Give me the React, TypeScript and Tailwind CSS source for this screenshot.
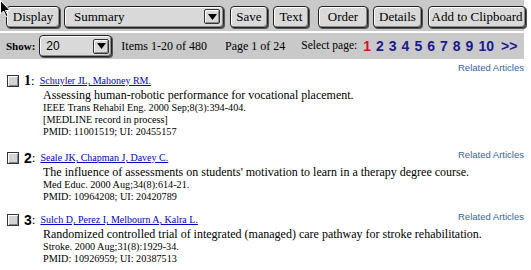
import React from "react";

const base =
  "h-[22px] flex items-center rounded-[4px] border border-[#222] bg-[#d9d9d9] text-[13px] text-black shadow-[inset_1px_1px_0_#fff,inset_-1px_-1px_0_#8a8a8a,1px_1px_0_#555] shrink-0 whitespace-nowrap";
const btn = base + " justify-center";

const sans = { fontFamily: '"Liberation Sans", Arial, sans-serif' };

function Arrow() {
  return (
    <span className="w-[16px] h-[15px] rounded-[2px] border border-[#333] bg-[#d9d9d9] shadow-[inset_1px_1px_0_#fff,inset_-1px_-1px_0_#8a8a8a] flex items-center justify-center">
      <svg width="9" height="6" viewBox="0 0 9 6">
        <path d="M0 0H9L4.5 6Z" fill="#000" />
      </svg>
    </span>
  );
}

function Checkbox() {
  return (
    <span className="w-[12px] h-[12px] shrink-0 border border-[#333] bg-[#d4d4d4] shadow-[inset_1px_1px_0_#fff,inset_-1px_-1px_0_#888]" />
  );
}

type Item = {
  n: string;
  authors: string;
  title: string;
  lines: string[];
  mt: string;
};

const items: Item[] = [
  {
    n: "1",
    authors: "Schuyler JL, Mahoney RM.",
    title: "Assessing human-robotic performance for vocational placement.",
    lines: [
      "IEEE Trans Rehabil Eng. 2000 Sep;8(3):394-404.",
      "[MEDLINE record in process]",
      "PMID: 11001519; UI: 20455157",
    ],
    mt: "mt-[3px]",
  },
  {
    n: "2",
    authors: "Seale JK, Chapman J, Davey C.",
    title:
      "The influence of assessments on students' motivation to learn in a therapy degree course.",
    lines: ["Med Educ. 2000 Aug;34(8):614-21.", "PMID: 10964208; UI: 20420789"],
    mt: "mt-[13px]",
  },
  {
    n: "3",
    authors: "Sulch D, Perez I, Melbourn A, Kalra L.",
    title:
      "Randomized controlled trial of integrated (managed) care pathway for stroke rehabilitation.",
    lines: ["Stroke. 2000 Aug;31(8):1929-34.", "PMID: 10926959; UI: 20387513"],
    mt: "mt-[10px]",
  },
];

function Related({ className = "" }: { className?: string }) {
  return (
    <span
      className={"text-[9.5px] text-[#336699] leading-[12px] whitespace-nowrap " + className}
      style={sans}
    >
      Related Articles
    </span>
  );
}

export default function App() {
  return (
    <div
      className="relative w-[531px] h-[270px] bg-white overflow-hidden text-black"
      style={{ fontFamily: '"Liberation Serif", "DejaVu Serif", serif' }}
    >
      {/* Toolbar 1 */}
      <div className="w-[524px] h-[31px] bg-[#c9c9c9] flex items-center pl-[6px] pt-[2px]">
        <div className={btn + " w-[54px]"}>Display</div>
        <div className={base + " w-[160px] ml-[4px] justify-between pl-[9px] pr-[3px]"}>
          <span>Summary</span>
          <Arrow />
        </div>
        <div className={btn + " w-[38px] ml-[6px]"}>Save</div>
        <div className={btn + " w-[36px] ml-[5px]"}>Text</div>
        <div className={btn + " w-[50px] ml-[9px]"}>Order</div>
        <div className={btn + " w-[49px] ml-[5px]"}>Details</div>
        <div className={btn + " w-[98px] ml-[6px]"}>Add to Clipboard</div>
      </div>
      {/* Toolbar 2 */}
      <div className="w-[524px] h-[26px] mt-[2px] bg-[#c9c9c9] flex items-center pl-[6px] whitespace-nowrap">
        <span className="text-[11px] font-bold">Show:</span>
        <div className={base + " w-[73px] h-[20px] ml-[4px] justify-between pl-[6px] pr-[2px]"}>
          <span style={sans} className="text-[12px]">
            20
          </span>
          <Arrow />
        </div>
        <span className="text-[12px] ml-[9px] shrink-0">Items 1-20 of 480</span>
        <span className="text-[12px] ml-[18px] shrink-0">Page 1 of 24</span>
        <span className="text-[11.5px] ml-[16px] shrink-0">Select page:</span>
        <div
          className="flex items-center text-[14px] font-bold ml-[6px] gap-[5px] text-[#1a1a8f]"
          style={sans}
        >
          <span className="text-[#e0101a]">1</span>
          <span>2</span>
          <span>3</span>
          <span>4</span>
          <span>5</span>
          <span>6</span>
          <span>7</span>
          <span>8</span>
          <span>9</span>
          <span>10</span>
          <span className="ml-[2px]">&gt;&gt;</span>
        </div>
      </div>

      {/* Results */}
      <div className="w-[524px] flex flex-col">
        {items.map((it, i) => (
          <div key={it.n} className={it.mt}>
            {i === 0 && (
              <div className="flex justify-end h-[12px]">
                <Related />
              </div>
            )}
            <div className="flex items-center h-[14px] pl-[7px]">
              <Checkbox />
              <span
                className="ml-[5px] text-[14px] font-bold leading-[14px]"
                style={i === 0 ? undefined : sans}
              >
                {it.n}
              </span>
              <span className="text-[13px] leading-[14px]">:</span>
              <a className="ml-[5px] text-[10px] text-[#0000cc] underline leading-[14px]" href="#">
                {it.authors}
              </a>
              {i !== 0 && <Related className="ml-auto self-start -mt-[2px]" />}
            </div>
            <div className="pl-[43px] text-[12px] leading-[14px] whitespace-nowrap">{it.title}</div>
            {it.lines.map((l) => (
              <div key={l} className="pl-[43px] text-[10.2px] leading-[12px] whitespace-nowrap">
                {l}
              </div>
            ))}
          </div>
        ))}
      </div>

      {/* Cursor */}
      <svg className="absolute left-0 top-0" width="12" height="18" viewBox="0 0 12 18">
        <path d="M0.5 0.5 L0.5 14 L3.5 11 L6 16.5 L8 15.5 L5.5 10.5 L10 10.5 Z" fill="#000" stroke="#fff" strokeWidth="1" />
      </svg>
    </div>
  );
}
